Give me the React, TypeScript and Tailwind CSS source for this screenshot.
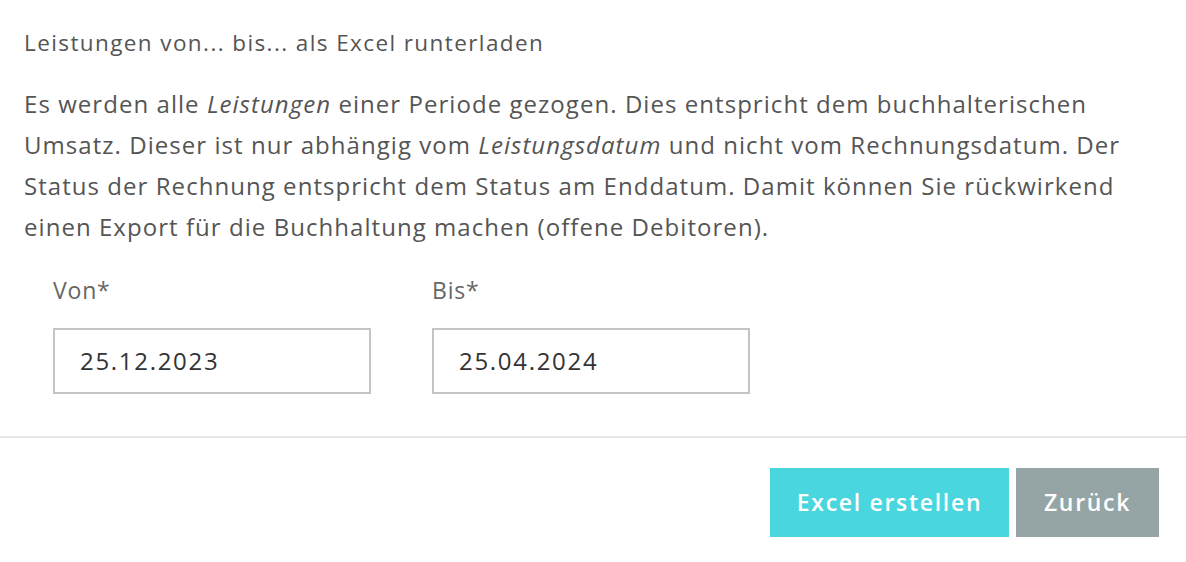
export default function App() {
  return (
    <div className="w-[1186px] h-[562px] bg-white font-['Open_Sans','Lato',sans-serif] text-[#555]">
      <div className="px-6 pt-[27px]">
        <h2 className="text-[22.5px] leading-[32px] tracking-[1.4px] text-[#555]">Leistungen von... bis... als Excel runterladen</h2>
        <p className="mt-[24px] text-[24px] leading-[41px] tracking-[1.05px] text-[#555]">
          Es werden alle <em>Leistungen</em> einer Periode gezogen. Dies entspricht dem buchhalterischen
          <br />
          Umsatz. Dieser ist nur abhängig vom <em>Leistungsdatum</em> und nicht vom Rechnungsdatum. Der
          <br />
          Status der Rechnung entspricht dem Status am Enddatum. Damit können Sie rückwirkend
          <br />
          einen Export für die Buchhaltung machen (offene Debitoren).
        </p>
        <div className="mt-[27px] ml-[29px] flex gap-[61px]">
          {[
            { label: 'Von*', value: '25.12.2023' },
            { label: 'Bis*', value: '25.04.2024' },
          ].map((f) => (
            <div key={f.label} className="flex flex-col">
              <label className="text-[23px] leading-[32px] tracking-[0.8px] text-[#666]">{f.label}</label>
              <div className="mt-[22px] w-[318px] h-[66px] border-2 border-[#c4c4c4] flex items-center px-[25px] text-[24px] tracking-[1.7px] text-[#333]">
                {f.value}
              </div>
            </div>
          ))}
        </div>
      </div>
      <div className="mt-[42px] border-t-2 border-[#e6e6e6]" />
      <div className="flex justify-end gap-[7px] pr-[27px] pt-[30px]">
        <button className="w-[239px] h-[69px] bg-[#4ad6de] text-white text-[23px] tracking-[1.7px] font-semibold">Excel erstellen</button>
        <button className="w-[143px] h-[69px] bg-[#95a5a5] text-white text-[23px] tracking-[1.7px] font-semibold">Zurück</button>
      </div>
    </div>
  );
}
